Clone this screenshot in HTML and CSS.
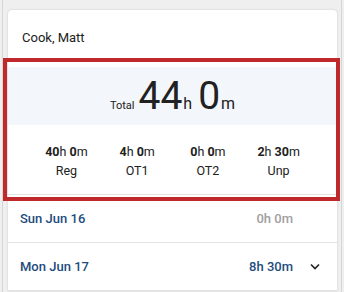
FILE: index.html
```html
<!DOCTYPE html>
<html lang="en">
<head>
  <meta charset="UTF-8"/>
  <meta name="viewport" content="width=device-width,initial-scale=1"/>
  <title>Timesheet</title>
  <link rel="stylesheet" href="styles.css">
</head>
<body>
  <div class="frame">
    <div class="card">

      <!-- Employee name -->
      <div class="employee">Cook, Matt</div>

      <!-- Weekly summary (highlighted) -->
      <div class="summary">
        <div class="total">
          <span class="total-label">Total</span>
          <span class="total-num">44</span><span class="total-unit">h</span>
          <span class="total-num">0</span><span class="total-unit">m</span>
        </div>
        <div class="breakdown">
          <div class="bucket">
            <div class="bucket-value"><b>40</b>h <b>0</b>m</div>
            <div class="bucket-label">Reg</div>
          </div>
          <div class="bucket">
            <div class="bucket-value"><b>4</b>h <b>0</b>m</div>
            <div class="bucket-label">OT1</div>
          </div>
          <div class="bucket">
            <div class="bucket-value"><b>0</b>h <b>0</b>m</div>
            <div class="bucket-label">OT2</div>
          </div>
          <div class="bucket">
            <div class="bucket-value"><b>2</b>h <b>30</b>m</div>
            <div class="bucket-label">Unp</div>
          </div>
        </div>
        <div class="highlight"></div>
      </div>

      <!-- Days -->
      <div class="day">
        <span class="day-name">Sun Jun 16</span>
        <span class="day-hours empty">0h 0m</span>
        <span class="day-toggle"></span>
      </div>
      <div class="day">
        <span class="day-name">Mon Jun 17</span>
        <span class="day-hours">8h 30m</span>
        <span class="day-toggle">
          <svg width="10" height="7" viewBox="0 0 10 7">
            <polyline points="1,1.5 5,5.5 9,1.5" fill="none" stroke="#222" stroke-width="1.6"/>
          </svg>
        </span>
      </div>

    </div>
  </div>
</body>
</html>
```

FILE: styles.css
```css
body {
  margin: 0;
  background: #efefef;
  font-family: Roboto, "Liberation Sans", Arial, sans-serif;
  color: #212121;
}
.frame {
  margin: 0 2px;
  min-height: 292px;
  box-sizing: border-box;
  padding: 10px 4px 0 5px;
  border-left: 1px solid #d6d6d6;
  border-right: 1px solid #d6d6d6;
}
.card {
  background: #fff;
  border-radius: 4px 4px 0 0;
  box-shadow: 0 0 2px rgba(0,0,0,0.18);
}
/* NAME HEADER */
.employee {
  padding: 18px 14px 19px;
  font-size: 13px;
  line-height: 20px;
}
/* SUMMARY */
.summary {
  position: relative;
  border-bottom: 1px solid #e4e4e4;
}
.total {
  height: 58px;
  display: flex;
  align-items: baseline;
  justify-content: center;
  padding-top: 10px;
  box-sizing: border-box;
  background: #f3f6fb;
  line-height: 1;
}
.total-label {
  font-size: 11px;
  margin-right: 4px;
}
.total-num {
  font-size: 39px;
}
.total-unit {
  font-size: 16px;
  margin: 0 6px 0 1px;
}
.total-unit:last-child {
  margin-right: 0;
}
.breakdown {
  display: grid;
  grid-template-columns: repeat(4, 1fr);
  padding: 18px 23px 15px;
}
.bucket {
  text-align: center;
  font-size: 12.5px;
}
.bucket-value {
  line-height: 17px;
}
.bucket-value b {
  font-weight: 700;
}
.bucket-label {
  margin-top: 2px;
  line-height: 17px;
}
.highlight {
  position: absolute;
  top: -9px;
  bottom: -7px;
  left: -5px;
  right: -3px;
  border: 4px solid #c0292b;
  pointer-events: none;
}
/* DAY ROWS */
.day {
  display: flex;
  align-items: center;
  height: 47px;
  padding-left: 12px;
  border-bottom: 1px solid #e4e4e4;
  font-size: 13px;
  font-weight: 500;
  color: #1d4c7d;
}
.day-name {
  flex: 1;
}
.day-hours.empty {
  color: #a0a0a0;
}
.day-toggle {
  width: 44px;
  display: flex;
  justify-content: center;
}
.day-toggle svg {
  display: block;
}
```
